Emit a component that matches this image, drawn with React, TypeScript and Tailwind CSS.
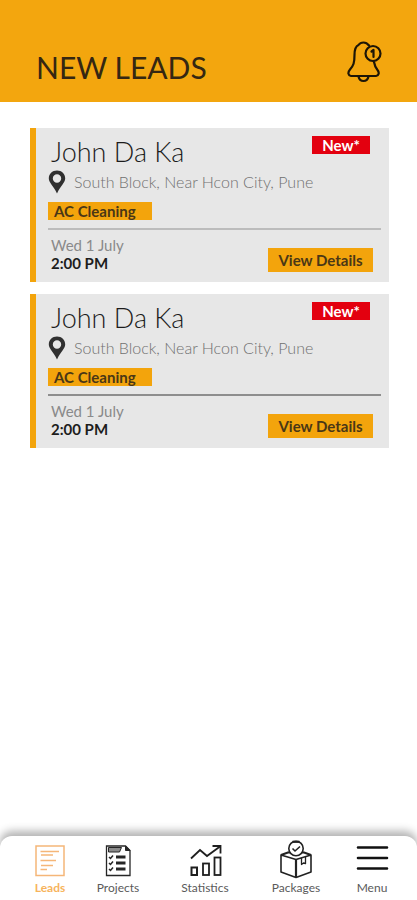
import type { ReactNode } from "react";

type Lead = {
  id: number;
  name: string;
  address: string;
  service: string;
  date: string;
  time: string;
  rule: string;
};

const leads: Lead[] = [
  { id: 1, name: "John Da Ka", address: "South Block, Near Hcon City, Pune", service: "AC Cleaning", date: "Wed 1 July", time: "2:00 PM", rule: "border-[#bcbcbc]" },
  { id: 2, name: "John Da Ka", address: "South Block, Near Hcon City, Pune", service: "AC Cleaning", date: "Wed 1 July", time: "2:00 PM", rule: "border-[#8e8e8e]" },
];

function BellIcon() {
  return (
    <svg viewBox="0 0 36 42" className="h-[42px] w-9" fill="none" stroke="#1d1607" strokeWidth="2.200" strokeLinejoin="round" strokeLinecap="round" aria-hidden="true">
      <path d="M22 4.500 C20.500 2.500 18.500 1.500 16.500 1.500 C14 1.500 12.500 2.500 11.500 4 C8 5.500 7.500 10 7.500 14 C7.500 22 6.500 24.500 3 28.500 C0.500 31.500 1 34.500 4 35 H29 C32 34.500 32.500 31.500 30.500 29 C28.500 26.500 27.500 24 27 21" />
      <path d="M11.500 35.500 C12 38 14 40 16.500 40 C19 40 21 38 21.500 35.500" />
      <circle cx="26" cy="12.500" r="7.500" />
      <path d="M24.500 10.500 L26.500 9 V16" />
    </svg>
  );
}

function PinIcon() {
  return (
    <svg viewBox="0 0 18 24" className="h-6 w-[18px] shrink-0" fill="#303030" fillRule="evenodd" aria-hidden="true">
      <path d="M9 0.500 C4.200 0.500 0.800 4 0.800 8.500 C0.800 13 5.500 15.500 9 23.500 C12.500 15.500 17.200 13 17.200 8.500 C17.200 4 13.800 0.500 9 0.500 Z M9 4.300 A4.200 4.200 0 1 1 9 12.700 A4.200 4.200 0 1 1 9 4.300 Z" />
    </svg>
  );
}

function LeadsIcon() {
  return (
    <svg viewBox="0 0 36 36" className="size-9" fill="none" stroke="#f5b678" aria-hidden="true">
      <rect x="4" y="3" width="28" height="29.500" strokeWidth="1.500" />
      <path d="M8.500 8.500 H27 M9 12 H21 M8.500 17.500 H24 M9 22.500 H21 M8.500 26.500 H15" strokeWidth="1.400" />
    </svg>
  );
}

function ProjectsIcon() {
  return (
    <svg viewBox="0 0 36 36" className="size-9" fill="none" stroke="#262626" aria-hidden="true">
      <path d="M6.500 3 H25.500 L30 7.500 V32.500 H6.500 Z" strokeWidth="1.300" />
      <path d="M25.500 3 V7.500 H30 Z" fill="#262626" />
      <path d="M8.500 4.500 H21.500 L19.500 9 H8.500 Z" strokeWidth="1" fill="#8b8b8b" />
      <path d="M16 14 H25.500 M16 20 H25.500 M16 26 H25.500" strokeWidth="3" />
      <path d="M9 14 L10.500 15.500 L13 12.500 M9 20 L10.500 21.500 L13 18.500 M9 26 L10.500 27.500 L13 24.500" strokeWidth="1.500" />
    </svg>
  );
}

function StatisticsIcon() {
  return (
    <svg viewBox="0 0 36 36" className="size-9" fill="none" stroke="#1f1f1f" aria-hidden="true">
      <path d="M4 15.500 L13 7 L20 13 L33 3.500" strokeWidth="1.800" />
      <path d="M25.500 3 H33.500 V10.500" strokeWidth="1.800" />
      <rect x="4.500" y="24.500" width="5.500" height="7.500" strokeWidth="2" />
      <rect x="16" y="20.500" width="6" height="11.500" strokeWidth="1.800" />
      <rect x="27.500" y="14.500" width="6" height="17.500" strokeWidth="1.800" />
    </svg>
  );
}

function PackagesIcon() {
  return (
    <svg viewBox="0 0 36 40" className="h-10 w-9" fill="none" stroke="#222" strokeWidth="1.600" strokeLinejoin="round" aria-hidden="true">
      <path d="M3 16 V33 L18 38.500 L33 33 V16 L18 20.500 Z" />
      <path d="M18 20.500 V38.500" strokeWidth="2.200" />
      <path d="M3 16 L10 13.500 H26 L33 16" strokeWidth="2" />
      <circle cx="18" cy="9.500" r="7.200" fill="#fff" />
      <path d="M14.500 2.800 H21.500" strokeWidth="2.200" />
      <path d="M14.500 9.500 L17 12 L22 7.500" />
      <path d="M23.500 19 V25.500 L25.500 24 L27.500 24.500 V18" strokeWidth="1.300" />
    </svg>
  );
}

function MenuIcon() {
  return (
    <svg viewBox="0 0 36 36" className="size-9" stroke="#111" strokeWidth="2.600" strokeLinecap="round" aria-hidden="true">
      <path d="M4 4.500 H33 M4 15 H33 M4 25.500 H33" />
    </svg>
  );
}

function LeadCard({ lead }: { lead: Lead }) {
  return (
    <article className="border-l-[6px] border-[#f3a40c] bg-[#e7e7e7] pr-2 pl-3">
      <div className="flex items-start justify-between pr-[11px]">
        <h2 className="pt-2 pl-[3px] text-[27px] leading-8 font-light text-[#1c1c1c]">{lead.name}</h2>
        <span className="mt-2 flex h-[18px] w-[58px] items-center justify-center bg-[#e3000f] text-[15px] leading-4 font-bold text-white">New*</span>
      </div>
      <p className="flex h-7 items-center gap-2 text-base leading-5 font-light text-[#707070]">
        <PinIcon />
        {lead.address}
      </p>
      <div className="pt-[6px]">
        <span className="flex h-[18px] w-[104px] items-center bg-[#f3a40c] pl-[6px] text-[15px] leading-4 font-bold text-[#4a3716]">{lead.service}</span>
      </div>
      <hr className={`mt-2 border-t-2 ${lead.rule}`} />
      <div className="flex items-end justify-between pt-[6px] pr-2 pb-[10px]">
        <div className="pl-[3px] text-[15px] leading-[18px]">
          <p className="text-[#8a8a8a]">{lead.date}</p>
          <p className="font-bold text-[#1d1d1d]">{lead.time}</p>
        </div>
        <button type="button" className="h-6 w-[105px] bg-[#f3a40c] text-[15px] leading-5 font-bold text-[#4a3716]">View Details</button>
      </div>
    </article>
  );
}

function NavItem({ label, icon, active = false }: { label: string; icon: ReactNode; active?: boolean }) {
  return (
    <a href="#" aria-current={active ? "page" : undefined} className={`flex flex-col items-center text-xs leading-4 ${active ? "font-bold text-[#f7b45c]" : "text-[#5a5a5a]"}`}>
      <span className="flex h-11 items-end pb-px">{icon}</span>
      {label}
    </a>
  );
}

export default function App() {
  return (
    <div className="flex min-h-screen flex-col bg-white font-['Lato','Open_Sans',sans-serif]">
      <header className="flex items-end justify-between bg-[#f3a60e] pt-[41px] pr-[34px] pb-[19px] pl-9">
        <h1 className="text-[30px] leading-8 text-[#352712]">NEW LEADS</h1>
        <button type="button" aria-label="Notifications, 1 new">
          <BellIcon />
        </button>
      </header>
      <main className="flex grow flex-col gap-3 pt-[26px] pr-7 pb-6 pl-[30px]">
        {leads.map((lead) => (
          <LeadCard key={lead.id} lead={lead} />
        ))}
      </main>
      <nav aria-label="Main" className="grid h-16 grid-cols-[68fr_68fr_106fr_76fr_76fr] items-start rounded-t-xl bg-white pr-[7px] pl-4 shadow-[0_-5px_8px_rgba(0,0,0,0.3)]">
        <NavItem label="Leads" icon={<LeadsIcon />} active />
        <NavItem label="Projects" icon={<ProjectsIcon />} />
        <NavItem label="Statistics" icon={<StatisticsIcon />} />
        <NavItem label="Packages" icon={<PackagesIcon />} />
        <NavItem label="Menu" icon={<MenuIcon />} />
      </nav>
    </div>
  );
}
